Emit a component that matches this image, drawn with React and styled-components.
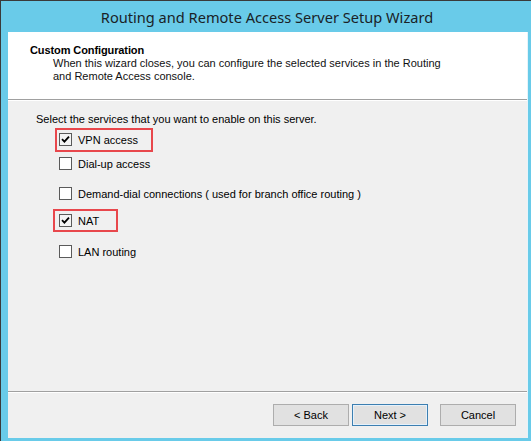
import styled, { createGlobalStyle } from "styled-components";

const GlobalStyle = createGlobalStyle`
  html, body {
    margin: 0;
    padding: 0;
    background: #69cbe9;
  }
  * {
    box-sizing: border-box;
  }
`;

const Window = styled.div`
  width: 531px;
  height: 441px;
  display: flex;
  flex-direction: column;
  background: #69cbe9;
  border-top: 1px solid #3a3a3a;
  border-left: 1px solid #3a3a3a;
  font-family: "Liberation Sans", Arial, sans-serif;
  font-size: 11px;
  color: #000;
`;

const TitleBar = styled.div`
  height: 31px;
  flex: none;
  display: flex;
  align-items: center;
  justify-content: center;
  padding-left: 2px;
  font-family: "Noto Sans", "Open Sans", sans-serif;
  font-size: 14.6px;
  color: #1a2226;
`;

const Client = styled.div`
  flex: 1;
  margin: 0 3px 3px 7px;
  display: flex;
  flex-direction: column;
  background: #f0f0f0;
  border-right: 1px solid #e6f4fa;
`;

const Header = styled.div`
  height: 68px;
  flex: none;
  background: #fff;
  padding: 12px 0 0 22px;
  border-bottom: 1px solid #a0a0a0;
  box-shadow: 0 1px 0 #fff;
`;

const HeaderTitle = styled.div`
  font-weight: bold;
  font-size: 11px;
  letter-spacing: -0.1px;
  line-height: 13px;
`;

const HeaderText = styled.div`
  margin-left: 23px;
  line-height: 13px;
  width: 400px;
  color: #111;
`;

const Body = styled.div`
  flex: 1;
  padding: 13px 0 0 28px;
  border-bottom: 1px solid #a0a0a0;
  box-shadow: 0 1px 0 #fff;
`;

const Prompt = styled.div`
  line-height: 13px;
  margin-bottom: 7px;
`;

const Options = styled.div`
  display: flex;
  flex-direction: column;
  padding-left: 23px;
`;

const Option = styled.label`
  position: relative;
  display: flex;
  align-items: center;
  gap: 6px;
  height: 13px;
  margin-top: ${(p) => p.$space}px;
`;

const Box = styled.span`
  width: 13px;
  height: 13px;
  flex: none;
  border: 1px solid #5a5a5a;
  background: ${(p) => (p.$checked ? "#f4f4f4" : "#fff")};
  display: flex;
  align-items: center;
  justify-content: center;
`;

const Highlight = styled.span`
  position: absolute;
  left: ${(p) => p.$x}px;
  top: -5px;
  height: ${(p) => p.$h}px;
  width: ${(p) => p.$w}px;
  border: 2px solid #e8474c;
`;

const Footer = styled.div`
  height: 46px;
  flex: none;
  display: flex;
  align-items: center;
  justify-content: flex-end;
  padding: 0 11px 1px 0;
`;

const Button = styled.button`
  width: 76px;
  height: 22px;
  margin-left: ${(p) => p.$gap}px;
  background: #e1e1e1;
  border: 1px solid ${(p) => (p.$primary ? "#3c7fb1" : "#adadad")};
  box-shadow: ${(p) => (p.$primary ? "inset 0 0 0 1px #e5f1fb" : "none")};
  font-family: "Liberation Sans", Arial, sans-serif;
  font-size: 11px;
  color: #000;
  padding: 0;
`;

const Check = () => (
  <svg width="9" height="9" viewBox="0 0 9 9">
    <path d="M1 4.2 L3.4 6.6 L8 1.6" fill="none" stroke="#000" strokeWidth="1.8" />
  </svg>
);

const options = [
  { label: "VPN access", checked: true, space: 0, mark: { x: -4, w: 98, h: 24 } },
  { label: "Dial-up access", space: 11 },
  { label: "Demand-dial connections ( used for branch office routing )", space: 17 },
  { label: "NAT", checked: true, space: 14, mark: { x: -6, w: 65, h: 23 } },
  { label: "LAN routing", space: 18 },
];

export default function App() {
  return (
    <>
      <GlobalStyle />
      <Window>
        <TitleBar>Routing and Remote Access Server Setup Wizard</TitleBar>
        <Client>
          <Header>
            <HeaderTitle>Custom Configuration</HeaderTitle>
            <HeaderText>
              When this wizard closes, you can configure the selected services in the Routing
              and Remote Access console.
            </HeaderText>
          </Header>
          <Body>
            <Prompt>Select the services that you want to enable on this server.</Prompt>
            <Options>
              {options.map((o) => (
                <Option key={o.label} $space={o.space}>
                  <Box $checked={o.checked}>{o.checked && <Check />}</Box>
                  {o.label}
                  {o.mark && <Highlight $x={o.mark.x} $w={o.mark.w} $h={o.mark.h} />}
                </Option>
              ))}
            </Options>
          </Body>
          <Footer>
            <Button>&lt; Back</Button>
            <Button $primary $gap={3}>Next &gt;</Button>
            <Button $gap={12}>Cancel</Button>
          </Footer>
        </Client>
      </Window>
    </>
  );
}
